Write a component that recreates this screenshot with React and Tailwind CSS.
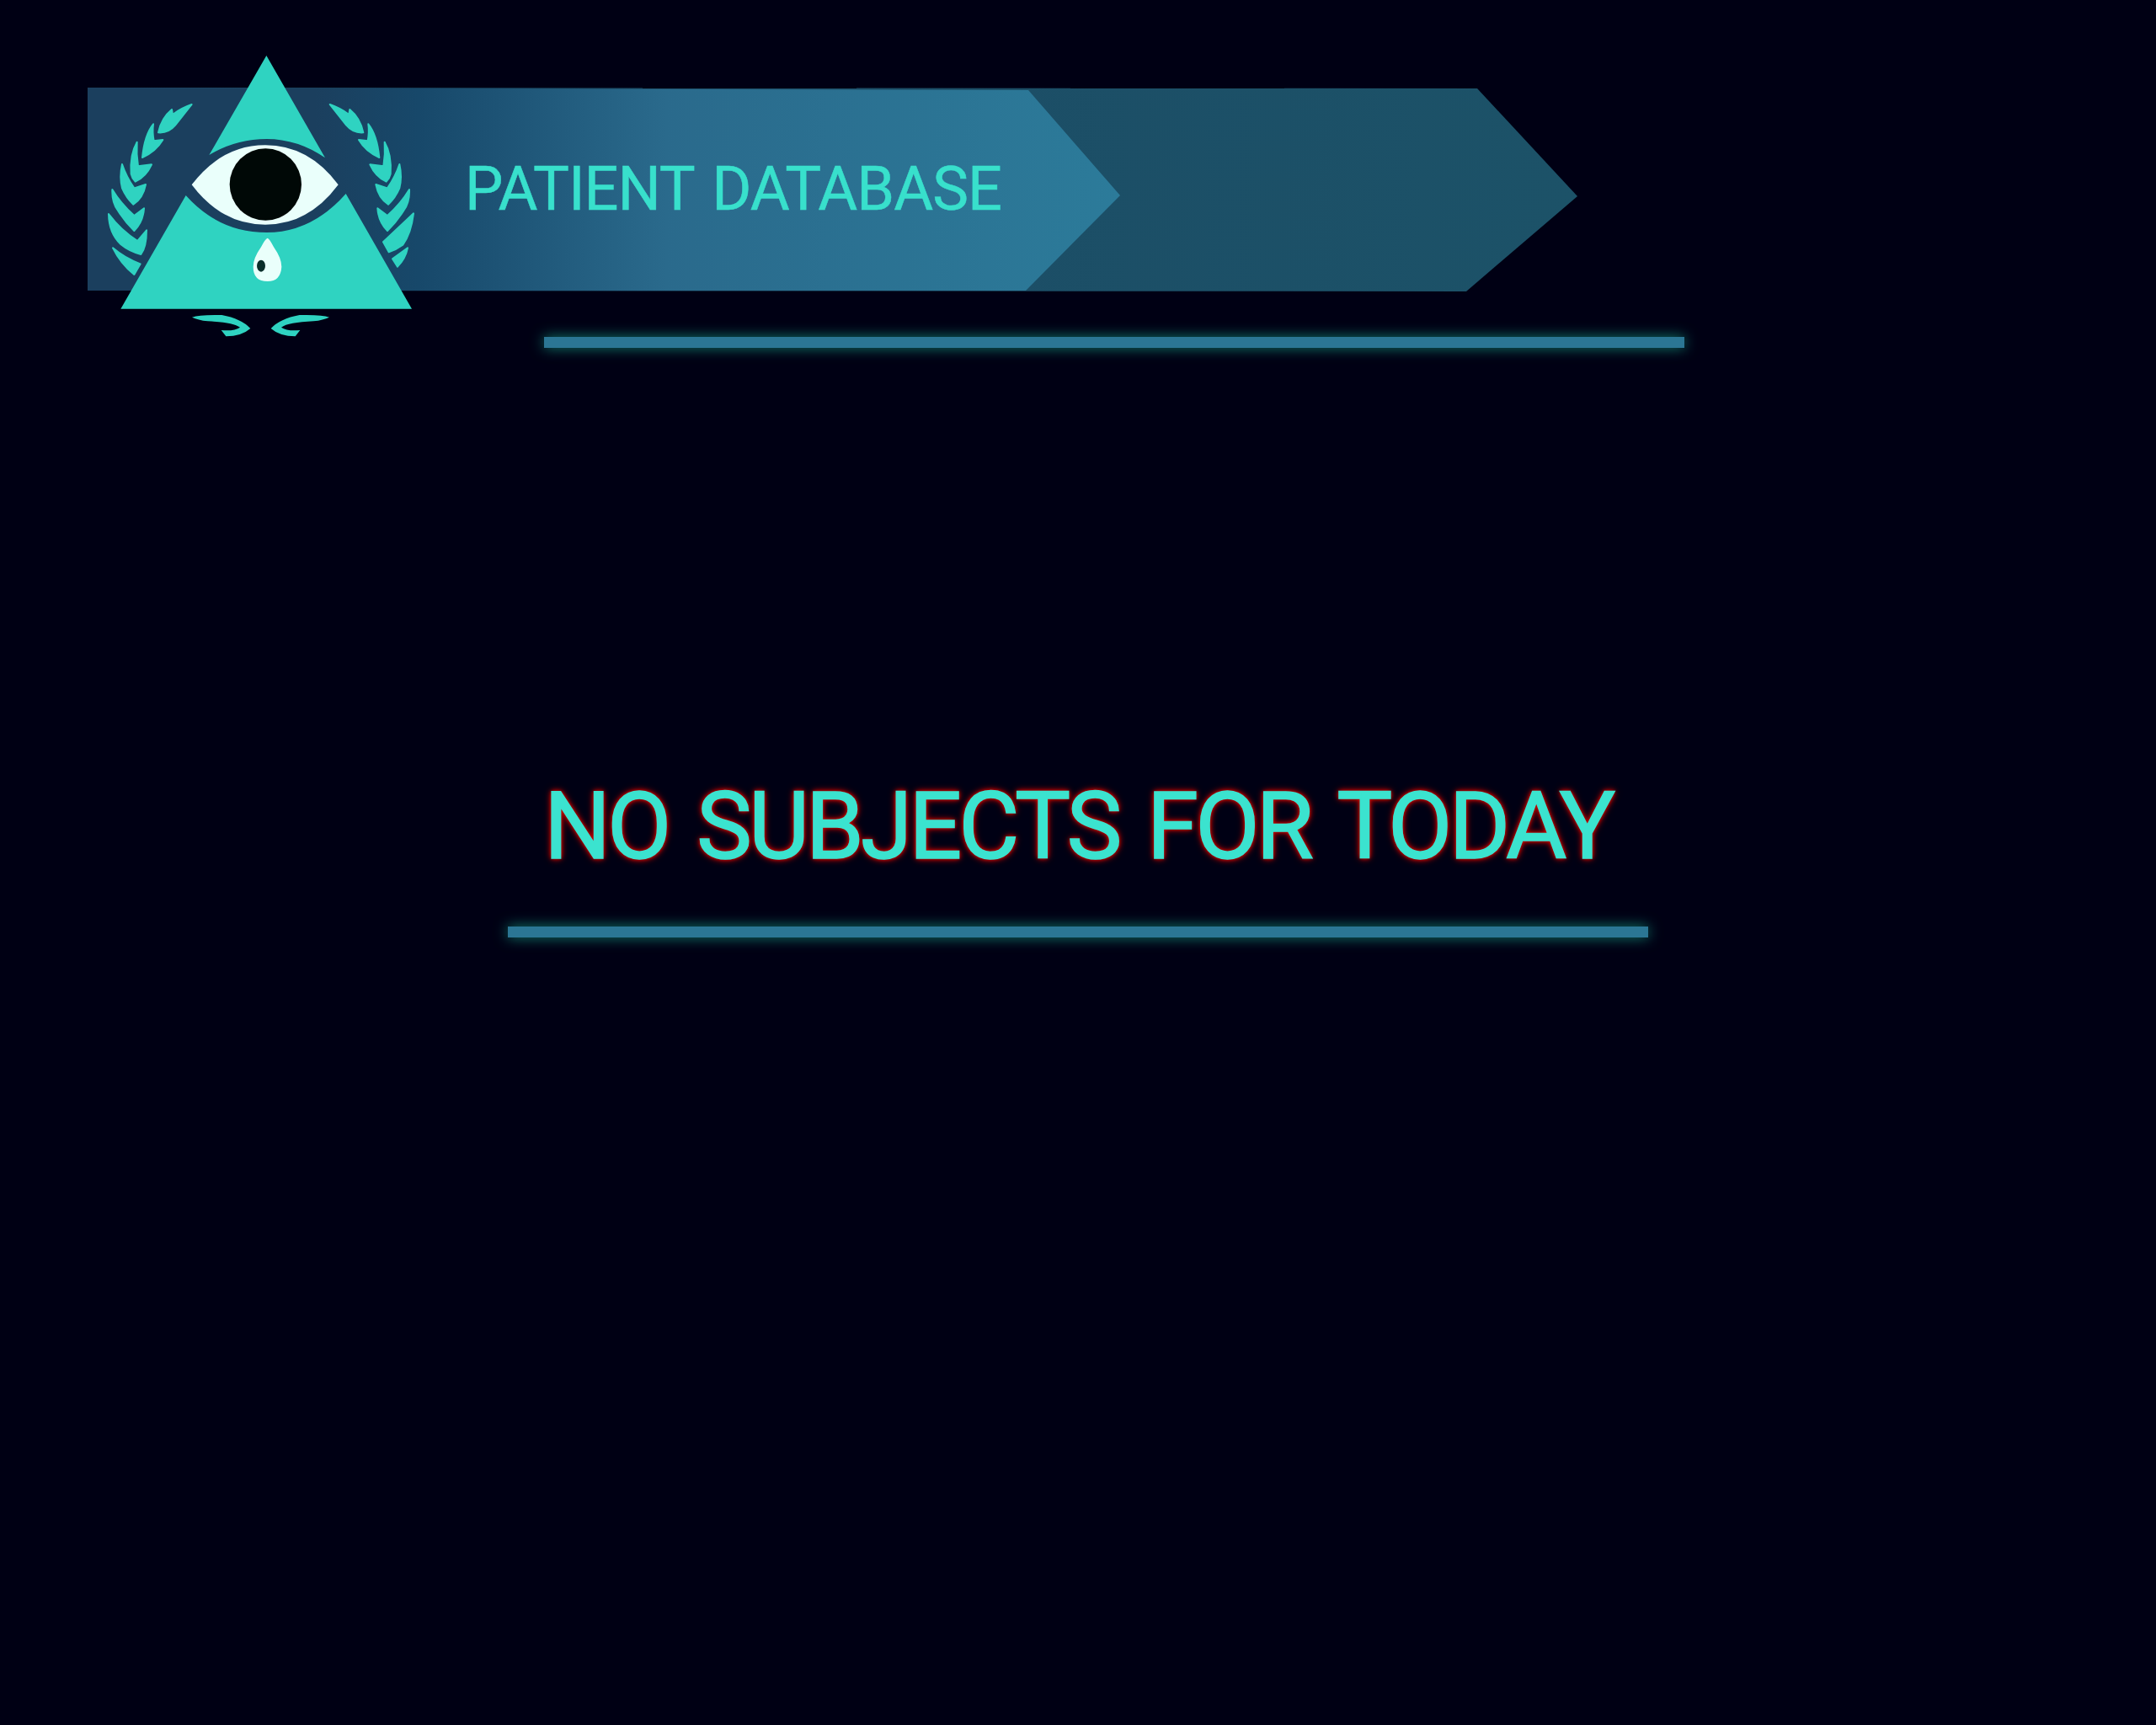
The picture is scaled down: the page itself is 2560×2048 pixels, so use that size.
import React from 'react';

// Eye-in-triangle emblem, coordinates follow a 3x grid of the 420x360 box
function Emblem() {
  const teal = '#2fd3c1';
  return (
    <svg viewBox="0 0 1260 1080" className="absolute left-[-14px] top-[-54px] w-[420px] h-[360px]">
      <g fill={teal}>
        <g stroke={teal} strokeWidth="6" strokeLinejoin="round">
          <path d="M413 222 Q375 235 345 258 L342 240 Q305 270 294 322 Q330 325 355 295 Z" />
          <path d="M276 292 Q245 330 237 411 Q285 390 310 348 L278 352 Q272 320 276 292 Z" />
          <path d="M218 356 Q192 400 197 470 Q200 485 212 497 Q250 480 270 436 L222 442 Q215 400 218 356 Z" />
          <path d="M165 435 Q155 480 165 520 Q180 555 205 578 Q240 555 249 507 L208 520 Q180 480 165 435 Z" />
          <path d="M130 525 Q128 570 150 600 Q175 640 208 672 Q240 640 243 592 L208 618 Q160 575 130 525 Z" />
          <path d="M117 612 Q118 680 160 720 Q190 745 232 756 Q252 730 252 670 L220 708 Q160 670 117 612 Z" />
          <path d="M132 733 Q160 790 208 828 L230 790 Q175 770 132 733 Z" />
          <g transform="translate(1318 0) scale(-1 1)">
            <path d="M413 222 Q375 235 345 258 L342 240 Q305 270 294 322 Q330 325 355 295 Z" />
            <path d="M276 292 Q245 330 237 411 Q285 390 310 348 L278 352 Q272 320 276 292 Z" />
            <path d="M218 356 Q192 400 197 470 Q200 485 212 497 Q250 480 270 436 L222 442 Q215 400 218 356 Z" />
            <path d="M165 435 Q155 480 165 520 Q180 555 205 578 Q240 555 249 507 L208 520 Q180 480 165 435 Z" />
            <path d="M130 525 Q128 570 150 600 Q175 640 208 672 Q240 640 243 592 L208 618 Q160 575 130 525 Z" />
          </g>
          <path d="M1203 610 Q1195 680 1165 722 Q1140 740 1115 748 L1095 712 Z" />
          <path d="M1182 733 L1128 772 L1146 800 Q1175 770 1182 733 Z" />
        </g>

        {/* triangle, split by the eye */}
        <path d="M679 48 L888 412 Q790 345 680 345 Q570 345 475 402 Z" />
        <path d="M392 546 Q510 678 680 678 Q840 678 962 540 L1197 950 L160 950 Z" />

        {/* swirls under the triangle */}
        <path d="M414 980 Q440 970 520 972 Q590 985 622 1020 Q590 1048 535 1048 L518 1026 Q565 1030 585 1016 Q560 998 470 994 Q435 990 414 980 Z" />
        <path transform="translate(1317 0) scale(-1 1)" d="M414 980 Q440 970 520 972 Q590 985 622 1020 Q590 1048 535 1048 L518 1026 Q565 1030 585 1016 Q560 998 470 994 Q435 990 414 980 Z" />
      </g>
      <path d="M413 508 Q520 367 675 367 Q830 367 935 508 Q830 650 675 650 Q520 650 413 508 Z" fill="#eafffb" />
      <circle cx="676" cy="507" r="128" fill="#000806" />
      <path d="M683 698 Q690 700 705 730 Q733 770 733 800 Q730 852 683 852 Q632 852 632 800 Q632 770 660 730 Q675 700 683 698 Z" fill="#eafffb" />
      <ellipse cx="660" cy="797" rx="15" ry="21" fill="#0a2e2a" />
    </svg>
  );
}

export default function App() {
  return (
    <div className="min-h-screen bg-[#000014] font-['Roboto',sans-serif]">
      <div className="pt-[104px]">
        <div className="relative ml-[104px] w-[1769px] h-[242px]">
          <div className="h-full bg-gradient-to-r from-[#1b4864] to-[#1c5268] [clip-path:polygon(0_0,1650px_1px,1769px_129px,1637px_242px,0_241px)]">
            <div className="flex items-center h-full w-[1226px] pl-[448px] bg-[linear-gradient(90deg,#1b3f5e_0,#1b3f5e_22%,#17486a_32%,#2a6a8c_56%,#2c7b9a_100%)] [clip-path:polygon(0_0,1117px_3px,1226px_128px,1114px_241px,0_241px)]">
              <h1 className="text-[72px] tracking-[-1px] [word-spacing:5px] [-webkit-text-stroke:0.5px_#38e0cc] leading-none text-[#38e0cc] whitespace-nowrap">PATIENT DATABASE</h1>
            </div>
          </div>
          <Emblem />
        </div>
      </div>

      <div className="ml-[646px] mt-[54px] w-[1354px] h-[13px] bg-[#2b7694] shadow-[0_0_16px_#12806f]" />

      <div className="mt-[513px] text-center text-[111px] tracking-[-4px] [word-spacing:10px] [-webkit-text-stroke:1.5px_#3be3cf] leading-none text-[#3be3cf] [text-shadow:0_0_4px_#e00000,0_0_7px_#c00000,0_0_10px_#a00000] whitespace-nowrap">
        NO SUBJECTS FOR TODAY
      </div>

      <div className="mx-auto mt-[63px] w-[1354px] h-[13px] bg-[#2b7694] shadow-[0_0_16px_#12806f]" />
    </div>
  );
}
